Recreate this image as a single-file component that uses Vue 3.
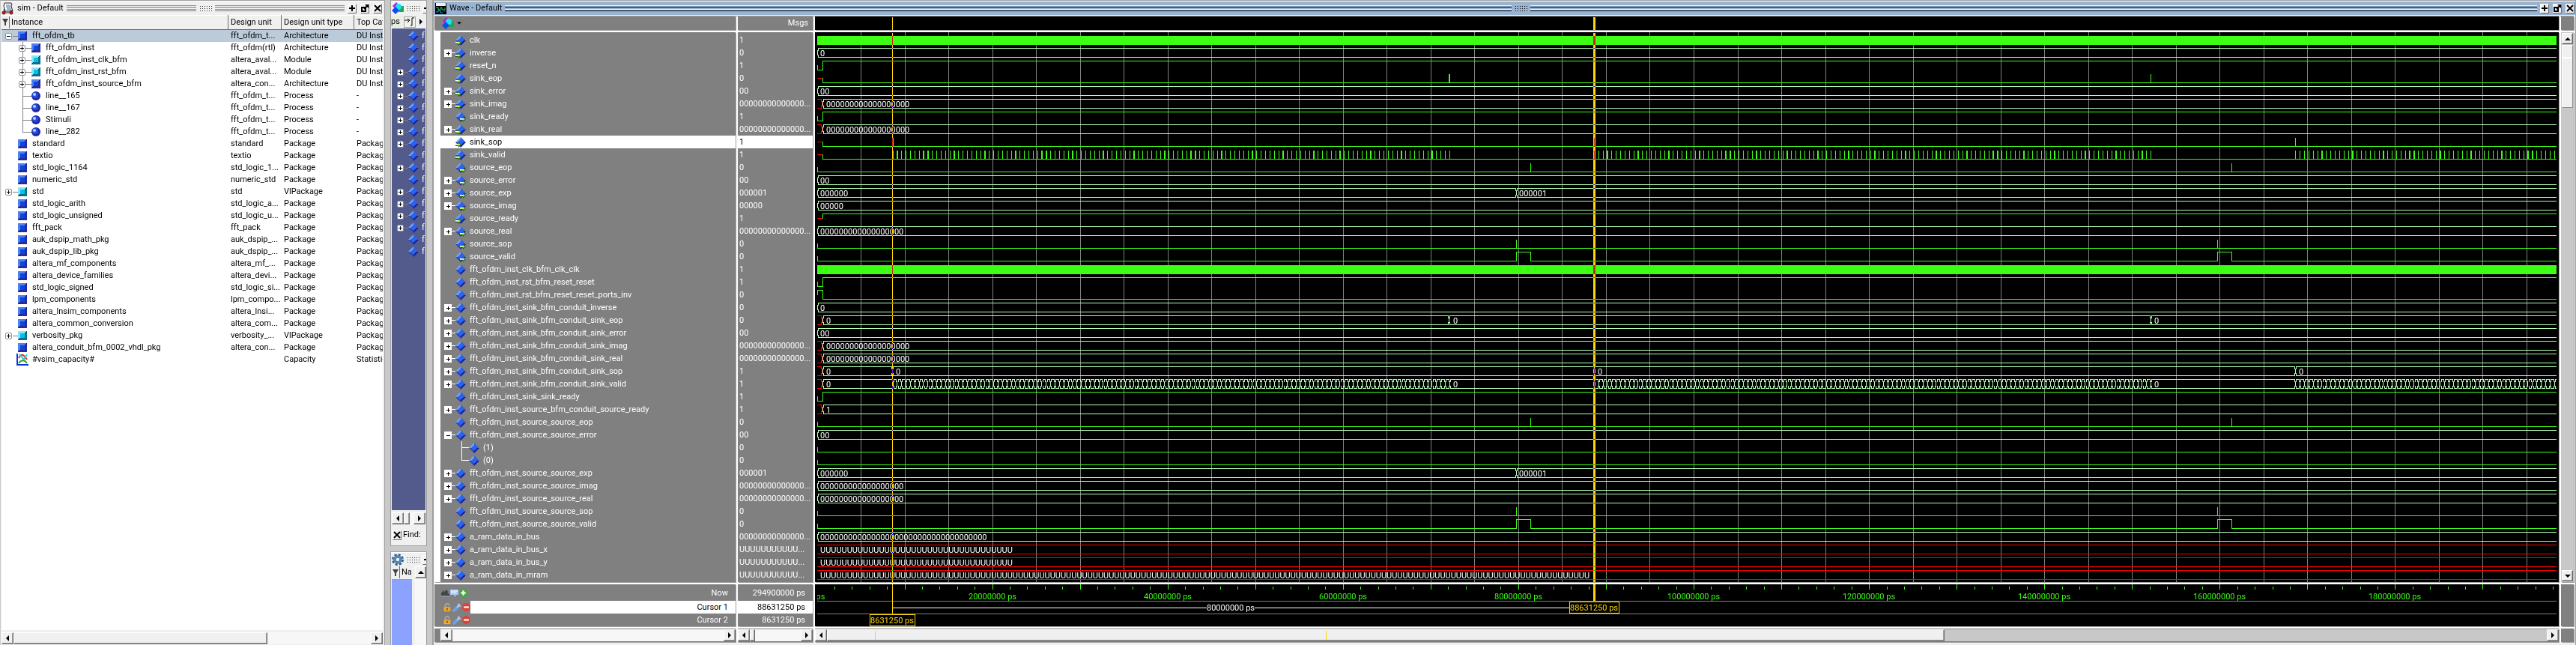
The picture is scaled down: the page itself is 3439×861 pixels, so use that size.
<script setup>
// ---- design hierarchy -------------------------------------------------
const A = 'Architecture', D = 'DU Inst', P = 'Package'
const tree = [
  ['fft_ofdm_tb', 'fft_ofdm_t...', A, D, 'blue', 0, '-'],
  ['fft_ofdm_inst', 'fft_ofdm(rtl)', A, D, 'blue', 1, '+'],
  ['fft_ofdm_inst_clk_bfm', 'altera_aval...', 'Module', D, 'cyan', 1, '+'],
  ['fft_ofdm_inst_rst_bfm', 'altera_aval...', 'Module', D, 'cyan', 1, '+'],
  ['fft_ofdm_inst_source_bfm', 'altera_con...', A, D, 'blue', 1, '+'],
  ['line__165', 'fft_ofdm_t...', 'Process', '-', 'ball', 1, ''],
  ['line__167', 'fft_ofdm_t...', 'Process', '-', 'ball', 1, ''],
  ['Stimuli', 'fft_ofdm_t...', 'Process', '-', 'ball', 1, ''],
  ['line__282', 'fft_ofdm_t...', 'Process', '-', 'ball', 1, 'end'],
  ['standard', 'standard', P, P, 'blue', 0, ''],
  ['textio', 'textio', P, P, 'blue', 0, ''],
  ['std_logic_1164', 'std_logic_1...', P, P, 'blue', 0, ''],
  ['numeric_std', 'numeric_std', P, P, 'blue', 0, ''],
  ['std', 'std', 'VlPackage', P, 'cyan', 0, '+'],
  ['std_logic_arith', 'std_logic_a...', P, P, 'blue', 0, ''],
  ['std_logic_unsigned', 'std_logic_u...', P, P, 'blue', 0, ''],
  ['fft_pack', 'fft_pack', P, P, 'blue', 0, ''],
  ['auk_dspip_math_pkg', 'auk_dspip_...', P, P, 'blue', 0, ''],
  ['auk_dspip_lib_pkg', 'auk_dspip_...', P, P, 'blue', 0, ''],
  ['altera_mf_components', 'altera_mf_...', P, P, 'blue', 0, ''],
  ['altera_device_families', 'altera_devi...', P, P, 'blue', 0, ''],
  ['std_logic_signed', 'std_logic_si...', P, P, 'blue', 0, ''],
  ['lpm_components', 'lpm_compo...', P, P, 'blue', 0, ''],
  ['altera_lnsim_components', 'altera_lnsi...', P, P, 'blue', 0, ''],
  ['altera_common_conversion', 'altera_com...', P, P, 'blue', 0, ''],
  ['verbosity_pkg', 'verbosity_...', 'VlPackage', P, 'cyan', 0, '+'],
  ['altera_conduit_bfm_0002_vhdl_pkg', 'altera_con...', P, P, 'blue', 0, ''],
  ['#vsim_capacity#', '', 'Capacity', 'Statistic', 'chart', 0, ''],
].map(([name, unit, type, cat, icon, level, mark]) => ({ name, unit, type, cat, icon, level, mark }))

const objects = [0, 0, 0, 1, 1, 1, 1, 1, 1, 1, 0, 1, 0, 1, 1, 1, 1, 0, 0]

// ---- signals ----------------------------------------------------------
// name, value, direction, expander, waveform kind, detail
const Z = '00000000000000...', UU = 'UUUUUUUUUUU...'
const z = n => '0'.repeat(n)
const F = 'fft_ofdm_inst_'
const frames = [100, 1037, 1973]
const signals = [
  ['clk', '1', 'in', '', 'clock'],
  ['inverse', '0', 'in', '+', 'bus', { text: '0' }],
  ['reset_n', '1', 'in', '', 'rise'],
  ['sink_eop', '0', 'in', '', 'low', { undef: 1, spikes: [[843, 2], [1780, 1]] }],
  ['sink_error', '00', 'in', '+', 'bus', { text: '00' }],
  ['sink_imag', Z, 'in', '+', 'bus', { undef: 1, text: z(18) }],
  ['sink_ready', '1', 'out', '', 'rise'],
  ['sink_real', Z, 'in', '+', 'bus', { undef: 1, text: z(18) }],
  ['sink_sop', '1', 'in', '', 'low', { undef: 1, spikes: [[100, 2], [1037, 1], [1973, 1]] }],
  ['sink_valid', '1', 'in', '', 'low', { undef: 1, train: 1 }],
  ['source_eop', '0', 'out', '', 'low', { spikes: [[952, 1], [1888, 1]] }],
  ['source_error', '00', 'out', '+', 'bus', { text: '00' }],
  ['source_exp', '000001', 'out', '+', 'bus', { text: '000000', changes: [[933, '000001', 4]] }],
  ['source_imag', '00000', 'out', '+', 'bus', { text: '00000' }],
  ['source_ready', '1', 'in', '', 'rise', { undef: 1 }],
  ['source_real', Z, 'out', '+', 'bus', { text: z(18) }],
  ['source_sop', '0', 'out', '', 'low', { spikes: [[933, 1], [1869, 1]] }],
  ['source_valid', '0', 'out', '', 'low', { boxes: [[933, 952], [1869, 1888]] }],
  [F + 'clk_bfm_clk_clk', '1', '', '', 'clock'],
  [F + 'rst_bfm_reset_reset', '1', '', '', 'rise'],
  [F + 'rst_bfm_reset_reset_ports_inv', '0', '', '', 'fall'],
  [F + 'sink_bfm_conduit_inverse', '0', '', '+', 'bus', { text: '0' }],
  [F + 'sink_bfm_conduit_sink_eop', '0', '', '+', 'bus', { undef: 1, text: '0', changes: [[843, '0', 6], [1780, '0', 5]] }],
  [F + 'sink_bfm_conduit_sink_error', '00', '', '+', 'bus', { text: '00' }],
  [F + 'sink_bfm_conduit_sink_imag', Z, '', '+', 'bus', { undef: 1, text: z(18) }],
  [F + 'sink_bfm_conduit_sink_real', Z, '', '+', 'bus', { undef: 1, text: z(18) }],
  [F + 'sink_bfm_conduit_sink_sop', '1', '', '+', 'bus', { undef: 1, text: '0', changes: frames.map(x => [x, '0', 5]) }],
  [F + 'sink_bfm_conduit_sink_valid', '1', '', '+', 'bus', { undef: 1, text: '0', train: 1, labels: [[849, '0'], [1785, '0']] }],
  [F + 'sink_sink_ready', '1', '', '', 'rise'],
  [F + 'source_bfm_conduit_source_ready', '1', '', '+', 'bus', { undef: 1, text: '1' }],
  [F + 'source_source_eop', '0', '', '', 'low', { spikes: [[952, 1], [1888, 1]] }],
  [F + 'source_source_error', '00', '', '-', 'bus', { text: '00' }],
  ['(1)', '0', '', 'mid', 'low'],
  ['(0)', '0', '', 'end', 'low'],
  [F + 'source_source_exp', '000001', '', '+', 'bus', { text: '000000', changes: [[933, '000001', 4]] }],
  [F + 'source_source_imag', Z, '', '+', 'bus', { text: z(18) }],
  [F + 'source_source_real', Z, '', '+', 'bus', { text: z(18) }],
  [F + 'source_source_sop', '0', '', '', 'low', { spikes: [[933, 1], [1869, 1]] }],
  [F + 'source_source_valid', '0', '', '', 'low', { boxes: [[933, 952], [1869, 1888]] }],
  ['a_ram_data_in_bus', Z, '', '+', 'bus', { text: z(36) }],
  ['a_ram_data_in_bus_x', UU, '', '+', 'unknown', { text: 'U'.repeat(36) }],
  ['a_ram_data_in_bus_y', UU, '', '+', 'unknown', { text: 'U'.repeat(36) }],
  ['a_ram_data_in_mram', UU, '', '+', 'unknown', { text: 'U'.repeat(144) }],
].map(([name, value, dir, mark, kind, opt = {}]) => ({ name, value, dir, mark, kind, opt }))

// ---- waveform geometry ------------------------------------------------
const SCALE = 11.705 // pixels per 1,000,000 ps
const FAR = 9000
const ROW = 17
const green = [], pale = [], red = [], blocks = [], labels = []
const H = (to, a, b, y) => to.push(`M${a} ${y}H${b}`)
const V = (to, x, a, b) => to.push(`M${x} ${a}V${b}`)

// half-period pulses: 128 per frame, three frames
const pulses = []
for (const start of [8.63, 88.63, 168.63]) {
  for (let i = 0; i < 128; i++) {
    const t = (start + i * 0.5) * SCALE
    const x = Math.floor(t)
    pulses.push([x, Math.max(1, Math.floor(t + 1.17) - x)])
  }
}

signals.forEach((s, i) => {
  const y = 2 + i * ROW
  const top = y + 2, mid = y + 8, low = y + 14
  const o = s.opt
  if (s.kind === 'clock') {
    blocks.push([0, y + 3, FAR, 12])
  } else if (s.kind === 'rise') {
    if (o.undef) { H(red, 0, 6, mid); V(green, 7, top, mid) }
    else { V(green, 0, mid, low); H(green, 0, 7, low); V(green, 7, top, low) }
    H(green, 7, FAR, top)
  } else if (s.kind === 'fall') {
    V(green, 0, top, mid); H(green, 0, 7, top); V(green, 7, top, low); H(green, 7, FAR, low)
  } else if (s.kind === 'low') {
    if (o.undef) { H(red, 0, 6, mid); V(green, 7, mid, low) }
    else V(green, 0, mid, low)
    let from = o.undef ? 7 : 0
    for (const [a, b] of o.boxes || []) {
      H(green, from, a, low); V(green, a, top, low); H(green, a, b, top); V(green, b, top, low)
      from = b
    }
    H(green, from, FAR, low)
    for (const [x, w] of (o.train ? pulses : o.spikes || [])) blocks.push([x, y + 3, w, 12])
  } else if (s.kind === 'unknown') {
    H(red, 0, FAR, top); H(red, 0, FAR, low)
    labels.push([4, y + 13, o.text])
  } else {
    let from = 0
    if (o.undef) {
      H(red, 0, 5, top); H(red, 0, 5, low)
      V(red, 5, top, top + 3); V(red, 5, low - 3, low); V(red, 6, top + 3, low - 3)
      from = 7
    }
    V(pale, from, top + 3, low - 3)
    V(pale, from + 1, top, top + 3); V(pale, from + 1, low - 3, low)
    labels.push([from ? 12 : 4, y + 13, o.text])
    from += 1
    const cross = (o.train ? pulses : (o.changes || []).map(c => [c[0], 1]))
    for (const [x, w] of cross) {
      H(pale, from, x - 1, top); H(pale, from, x - 1, low)
      V(pale, x - 1, top, top + 3); V(pale, x - 1, low - 3, low)
      V(pale, x, top + 3, low - 3)
      V(pale, x + w, top, top + 3); V(pale, x + w, low - 3, low)
      from = x + w
    }
    H(pale, from, FAR, top); H(pale, from, FAR, low)
    for (const [x, t, dx] of o.changes || []) labels.push([x + dx, y + 13, t])
    for (const [x, t] of o.labels || []) labels.push([x, y + 13, t])
  }
})

const grid = Array.from({ length: 120 }, (_, i) => Math.floor((i + 1) * 5 * SCALE))
const ticks = Array.from({ length: 300 }, (_, i) => ({
  x: Math.floor((i + 1) * 2 * SCALE), y: (i + 1) % 5 ? 3 : 0,
}))
const marks = Array.from({ length: 10 }, (_, i) => ({
  x: Math.floor(i * 20 * SCALE), text: (i ? i * 20 + '000000' : '0') + ' ps',
}))
const cursors = [{ x: 100, w: 1 }, { x: 1036, w: 3 }]
const overview = [{ left: '2.8%' }, { left: '29%' }]
const windowButtons = ['add', 'undock', 'close']
</script>

<template>
  <div class="app">
    <!-- shared drawings -->
    <svg class="defs" width="0" height="0" aria-hidden="true">
      <symbol id="i-blue" viewBox="0 0 12 12">
        <rect width="12" height="12" fill="#2a2a9c" /><path d="M0 0H12L0 12Z" fill="#4f80ee" />
        <path d="M0 12L3 9M9 3L12 0" stroke="#101040" /><rect x="3" y="3" width="6" height="6" fill="#0a46e6" />
      </symbol>
      <symbol id="i-cyan" viewBox="0 0 12 12">
        <rect width="12" height="12" fill="#08708c" /><path d="M0 0H12L0 12Z" fill="#8ce6f2" />
        <path d="M0 12L3 9M9 3L12 0" stroke="#064050" /><rect x="3" y="3" width="6" height="6" fill="#00c0f4" />
      </symbol>
      <symbol id="i-ball" viewBox="0 0 12 12">
        <circle cx="6" cy="6" r="6" fill="#2424a4" /><circle cx="5" cy="5" r="4" fill="#1d50e0" />
        <circle cx="4" cy="4" r="2" fill="#b8d0ff" />
      </symbol>
      <symbol id="i-chart" viewBox="0 0 16 16">
        <path d="M1 0V15H16" fill="none" stroke="#1034e0" stroke-width="2" />
        <path d="M3 6C6 0 9 0 14 8" fill="none" stroke="#e02828" stroke-width="2" />
        <path d="M4 1L10 8L14 1" fill="none" stroke="#30c8dc" stroke-width="2" />
        <path d="M3 13C6 8 11 8 14 13" fill="none" stroke="#38a030" stroke-width="2" />
      </symbol>
      <symbol id="i-dia" viewBox="0 0 14 14">
        <path d="M7 0L14 7H7Z" fill="#3560d8" /><path d="M7 0L0 7H7Z" fill="#7aa6fa" />
        <path d="M0 7L7 14V7Z" fill="#3344b8" /><path d="M14 7L7 14V7Z" fill="#1c1c90" />
        <path d="M7 3L11 7L7 11L3 7Z" fill="#2566f2" />
      </symbol>
      <symbol id="i-arrow" viewBox="0 0 8 7">
        <path d="M0 2H4V0L8 3L4 7V5H0Z" fill="#1c5a10" /><path d="M0 2H4V1L7 3L4 5V4H0Z" fill="#a8f040" />
        <path d="M0 2H4V3H0Z" fill="#fff" />
      </symbol>
      <symbol id="i-group" viewBox="0 0 16 16">
        <path d="M6 0L11 5L6 10L1 5Z" fill="#b41ed8" /><path d="M9 5H16V13H9Z" fill="#1ea850" />
        <circle cx="9" cy="6" r="4" fill="#18e4f6" /><path d="M5 6L10 11L5 16L0 11Z" fill="#0a50f0" />
      </symbol>
      <symbol id="i-add" viewBox="0 0 12 12"><path d="M6 2V10M2 6H10" stroke="#000" stroke-width="2" /></symbol>
      <symbol id="i-undock" viewBox="0 0 12 12">
        <path d="M2 5H7V10H2Z" fill="none" stroke="#000" stroke-width="2" /><path d="M5 7L9 3" stroke="#000" stroke-width="2" /><path d="M6 1H11V6Z" />
      </symbol>
      <symbol id="i-close" viewBox="0 0 12 12"><path d="M2 2L10 10M10 2L2 10" stroke="#000" stroke-width="2" /></symbol>
      <symbol id="i-left" viewBox="0 0 8 8"><path d="M6 0V8L2 4Z" /></symbol>
      <symbol id="i-right" viewBox="0 0 8 8"><path d="M2 0V8L6 4Z" /></symbol>
      <symbol id="i-up" viewBox="0 0 8 8"><path d="M0 6H8L4 2Z" /></symbol>
      <symbol id="i-down" viewBox="0 0 8 8"><path d="M0 2H8L4 6Z" /></symbol>
      <symbol id="i-filter" viewBox="0 0 8 9"><path d="M0 0H8L5 5V9H3V5Z" fill="#444" /></symbol>
      <symbol id="i-script" viewBox="0 0 17 17">
        <path d="M4 1H13Q15 3 13 5L15 12H5L3 5Z" fill="#fff" stroke="#222" />
        <path d="M6 4H12M6 6H12M7 8H13M7 10H13" stroke="#4868a8" />
        <path d="M3 9L5 13M13 10V13" stroke="#222" />
        <circle cx="3" cy="14" r="2" fill="#e01818" stroke="#600" /><circle cx="13" cy="14" r="2" fill="#e01818" stroke="#600" />
        <path d="M5 14H11" stroke="#222" />
      </symbol>
      <symbol id="i-wave" viewBox="0 0 15 15">
        <rect width="15" height="15" fill="#000" /><rect x="1" y="0" width="13" height="4" fill="#f0f0f0" />
        <path d="M1 6H4V9H7V6H9V9H13V6" fill="none" stroke="#20d060" /><path d="M1 12H4V10H7V13H10" fill="none" stroke="#20a8c8" />
        <path d="M10 11H14" stroke="#4040d0" />
      </symbol>
      <symbol id="i-gear" viewBox="0 0 16 16">
        <circle cx="8" cy="8" r="6" fill="none" stroke="#2f5a88" stroke-width="4" stroke-dasharray="2.7 2" />
        <circle cx="8" cy="8" r="4" fill="none" stroke="#5488b8" stroke-width="4" /><circle cx="8" cy="8" r="2" fill="#eef4f8" />
      </symbol>
      <symbol id="i-step" viewBox="0 0 14 12">
        <path d="M0 4H6M4 2L7 4L4 7" fill="none" stroke="#000" /><path d="M8 11H10V1H13" fill="none" stroke="#000" stroke-width="1" />
      </symbol>
      <symbol id="i-lock" viewBox="0 0 12 14">
        <path d="M3 7V4Q3 1 6 1Q9 1 9 4" fill="none" stroke="#aaa698" stroke-width="2" />
        <rect x="1" y="6" width="10" height="7" fill="#f4b43c" /><path d="M1 8H11M1 11H11" stroke="#d88c18" /><rect x="5" y="8" width="2" height="3" fill="#865a14" />
      </symbol>
      <symbol id="i-wrench" viewBox="0 0 12 12">
        <path d="M2 10L7 5" stroke="#6f9ee8" stroke-width="4" stroke-linecap="round" /><path d="M6 6L9 3" stroke="#b8c8e0" stroke-width="2" />
        <path d="M8 0Q6 3 8 4Q10 6 12 4L10 3V2Z" fill="#b8c8e0" />
      </symbol>
      <symbol id="i-minus" viewBox="0 0 10 10"><circle cx="5" cy="5" r="5" fill="#dc4238" /><path d="M2 5H8" stroke="#fff" stroke-width="2" /></symbol>
      <symbol id="i-plus" viewBox="0 0 10 10"><circle cx="5" cy="5" r="5" fill="#42a83a" /><path d="M2 5H8M5 2V8" stroke="#fff" stroke-width="2" /></symbol>
      <symbol id="i-config" viewBox="0 0 10 10"><path d="M0 9V5L3 2L4 4L6 1L8 3V6H10V9Z" fill="#444" /><path d="M0 9H10" stroke="#8ab0e0" /></symbol>
      <symbol id="i-note" viewBox="0 0 11 11"><path d="M0 1H11V8H8L6 11L5 8H0Z" fill="#a8c8f4" /><path d="M1 3H10M1 5H8" stroke="#fff" /></symbol>
    </svg>

    <!-- structure window -->
    <section class="panel sim">
      <header class="title">
        <svg class="i17"><use href="#i-script" /></svg>
        <h2>sim - Default</h2>
        <span class="rails"><i></i><i></i></span><span class="grip"></span><span class="rails"><i></i><i></i></span>
        <button v-for="b in windowButtons" :key="b" class="tool" :aria-label="b"><svg class="i12"><use :href="'#i-' + b" /></svg></button>
      </header>
      <div class="sheet">
        <table>
          <colgroup><col class="c-name"><col class="c-unit"><col class="c-type"><col></colgroup>
          <thead>
            <tr>
              <th><span class="filter"><svg class="i9"><use href="#i-filter" /></svg></span>Instance</th>
              <th>Design unit</th><th>Design unit type</th><th>Top Cat</th>
            </tr>
          </thead>
          <tbody>
            <tr v-for="(r, i) in tree" :key="r.name" :class="{ current: i === 0 }">
              <td>
                <div class="node" :class="{ child: r.level }">
                  <span class="slot" :class="{ trunk: r.level, last: r.mark === 'end' }">
                    <button v-if="r.mark === '+' || r.mark === '-'" class="exp" :class="{ open: r.mark === '-' }" :aria-label="'Toggle ' + r.name"></button>
                  </span>
                  <span class="link wide" :class="{ on: r.mark || r.level }"></span>
                  <svg :class="r.icon === 'chart' ? 'i16' : 'i12'"><use :href="'#i-' + r.icon" /></svg>
                  <span class="label">{{ r.name }}</span>
                </div>
              </td>
              <td>{{ r.unit }}</td><td>{{ r.type }}</td><td>{{ r.cat }}</td>
            </tr>
          </tbody>
        </table>
      </div>
      <div class="scroll">
        <button aria-label="Scroll left"><svg class="i8"><use href="#i-left" /></svg></button>
        <div class="track"><div class="thumb t-sim"></div></div>
        <button aria-label="Scroll right"><svg class="i8"><use href="#i-right" /></svg></button>
      </div>
    </section>

    <!-- objects and processes windows -->
    <div class="stack">
      <section class="panel objects">
        <header class="title">
          <svg class="i16"><use href="#i-group" /></svg><span class="grip"></span><button class="tool" aria-label="add"><svg class="i12"><use href="#i-add" /></svg></button>
        </header>
        <div class="time"><span>ps</span><button aria-label="Step"><svg class="i14"><use href="#i-step" /></svg></button><svg class="i8"><use href="#i-right" /></svg></div>
        <ul class="navy">
          <li v-for="(e, i) in objects" :key="i">
            <span class="slot"><button v-if="e" class="exp" aria-label="Expand object"></button></span>
            <span class="link" :class="{ on: e }"></span>
            <svg class="i14"><use href="#i-dia" /></svg><span class="label">f</span>
          </li>
        </ul>
        <div class="scroll">
          <button aria-label="Scroll left"><svg class="i8"><use href="#i-left" /></svg></button>
          <div class="track"><div class="thumb t-half"></div></div>
          <button aria-label="Scroll right"><svg class="i8"><use href="#i-right" /></svg></button>
        </div>
        <div class="find"><button class="tool" aria-label="Close find"><svg class="i12"><use href="#i-close" /></svg></button><span>Find:</span></div>
      </section>
      <section class="panel procs">
        <header class="title">
          <svg class="i16"><use href="#i-gear" /></svg><span class="grip"></span><button class="tool" aria-label="add"><svg class="i12"><use href="#i-add" /></svg></button>
        </header>
        <div class="procbody">
          <div class="proclist">
            <div class="prochead"><span class="filter"><svg class="i9"><use href="#i-filter" /></svg></span>Na</div>
            <div class="sky"></div>
          </div>
          <div class="vstrip"><button aria-label="Scroll up"><svg class="i8"><use href="#i-up" /></svg></button></div>
        </div>
      </section>
    </div>

    <!-- wave window -->
    <section class="panel wave">
      <header class="title active">
        <svg class="i15"><use href="#i-wave" /></svg>
        <h2>Wave - Default</h2>
        <span class="rails"><i></i><i></i></span><span class="grip"></span><span class="rails"><i></i><i></i></span>
        <button v-for="b in windowButtons" :key="b" class="tool" :aria-label="b"><svg class="i12"><use :href="'#i-' + b" /></svg></button>
      </header>
      <div class="panes">
        <div class="cell bar"><svg class="i16"><use href="#i-group" /></svg><svg class="i8"><use href="#i-down" /></svg></div>
        <div class="cell bar msgs">Msgs</div>
        <div class="cell ink">
          <svg class="plot"><g class="cursor"><rect v-for="c in cursors" :key="c.x" :x="c.x" y="1" :width="c.w" height="17" /></g></svg>
        </div>
        <div class="cell"></div>

        <div class="cell names">
          <ul>
            <li v-for="s in signals" :key="s.name" :class="{ picked: s.name === 'sink_sop', child: s.mark === 'mid' || s.mark === 'end' }">
              <span class="slot" :class="{ trunk: s.mark === 'mid' || s.mark === 'end', last: s.mark === 'end' }">
                <button v-if="s.mark === '+' || s.mark === '-'" class="exp" :class="{ open: s.mark === '-' }" :aria-label="'Toggle ' + s.name"></button>
              </span>
              <span class="link" :class="{ on: s.mark }"></span>
              <span class="sig"><svg class="i14"><use href="#i-dia" /></svg><svg v-if="s.dir" class="dir" :class="s.dir"><use href="#i-arrow" /></svg></span>
              <span class="label">{{ s.name }}</span>
            </li>
          </ul>
        </div>
        <div class="cell values">
          <ul><li v-for="s in signals" :key="s.name" :class="{ picked: s.name === 'sink_sop' }">{{ s.value }}</li></ul>
        </div>
        <div class="cell ink">
          <svg class="plot">
            <rect v-for="x in grid" :key="x" class="gridline" :x="x" y="0" width="1" height="9000" />
            <g transform="translate(0.5 0.5)" class="lines">
              <path class="pale" :d="pale.join('')" />
              <path class="green" :d="green.join('')" />
              <path class="red" :d="red.join('')" />
            </g>
            <rect v-for="(b, i) in blocks" :key="i" class="block" :x="b[0]" :y="b[1]" :width="b[2]" :height="b[3]" />
            <text v-for="(l, i) in labels" :key="'t' + i" class="value" :x="l[0]" :y="l[1]">{{ l[2] }}</text>
            <g class="cursor"><rect v-for="c in cursors" :key="c.x" :x="c.x" y="1" :width="c.w" height="9000" /></g>
          </svg>
        </div>
        <div class="cell vscroll">
          <button aria-label="Scroll up"><svg class="i8"><use href="#i-up" /></svg></button>
          <div class="vtrack"><div class="vthumb"></div></div>
          <button aria-label="Scroll down"><svg class="i8"><use href="#i-down" /></svg></button>
        </div>

        <div class="cell foot">
          <div class="frow now"><span class="tools"><svg class="i10"><use href="#i-config" /></svg><svg class="i10"><use href="#i-note" /></svg><svg class="i10"><use href="#i-plus" /></svg></span><span class="fname">Now</span></div>
          <div class="frow on"><span class="tools"><svg class="i12"><use href="#i-lock" /></svg><svg class="i12"><use href="#i-wrench" /></svg><svg class="i10"><use href="#i-minus" /></svg></span><span class="fname">Cursor 1</span></div>
          <div class="frow"><span class="tools"><svg class="i12"><use href="#i-lock" /></svg><svg class="i12"><use href="#i-wrench" /></svg><svg class="i10"><use href="#i-minus" /></svg></span><span class="fname">Cursor 2</span></div>
        </div>
        <div class="cell foot">
          <div class="frow now"><span class="fname">294900000 ps</span></div>
          <div class="frow on"><span class="fname">88631250 ps</span></div>
          <div class="frow"><span class="fname">8631250 ps</span></div>
        </div>
        <div class="cell ink">
          <svg class="plot">
            <rect v-for="t in ticks" :key="t.x" class="block" :x="t.x" :y="t.y" width="1" :height="7 - t.y" />
            <text v-for="m in marks" :key="m.x" class="mark" :x="m.x" y="20">{{ m.text }}</text>
            <rect class="gridline" x="0" y="22" width="9000" height="1" /><rect class="gridline" x="0" y="39" width="9000" height="1" />
            <rect x="100" y="31" width="904" height="1" fill="#fff" />
            <rect x="520" y="24" width="64" height="14" fill="#000" />
            <text class="value centre" x="552" y="35">80000000 ps</text>
            <rect class="amber" x="100" y="0" width="1" height="39" /><rect class="amber" x="1036" y="0" width="3" height="22" />
            <g transform="translate(0.5 0.5)"><rect class="tag" x="1004" y="23" width="66" height="15" /><rect class="tag" x="70" y="40" width="60" height="15" /></g>
            <text class="tagtext" x="1037" y="35">88631250 ps</text><text class="tagtext" x="100" y="52">8631250 ps</text>
          </svg>
        </div>
        <div class="cell"></div>

        <div class="cell base inset"><div class="scroll">
          <button aria-label="Scroll left"><svg class="i8"><use href="#i-left" /></svg></button><div class="track"></div><button aria-label="Scroll right"><svg class="i8"><use href="#i-right" /></svg></button>
        </div></div>
        <div class="cell base"><div class="scroll">
          <button aria-label="Scroll left"><svg class="i8"><use href="#i-left" /></svg></button><div class="track"><div class="thumb t-small"></div></div><button aria-label="Scroll right"><svg class="i8"><use href="#i-right" /></svg></button>
        </div></div>
        <div class="cell base"><div class="scroll solid">
          <button aria-label="Scroll left"><svg class="i8"><use href="#i-left" /></svg></button><div class="track"><div class="thumb t-wave"></div><i v-for="o in overview" :key="o.left" class="pin" :style="o"></i></div><button aria-label="Scroll right"><svg class="i8"><use href="#i-right" /></svg></button>
        </div></div>
        <div class="cell"></div>
      </div>
    </section>
  </div>
</template>

<style>
body { margin: 0; overflow: hidden; background: #c9c9c9; }
</style>

<style scoped>
.app {
  display: grid; grid-template-columns: 514px 49px minmax(0, 1fr); column-gap: 7px;
  height: 100vh; background: #c9c9c9; color: #000;
  font: 11px/16px Roboto, "Liberation Sans", sans-serif;
}
.defs { position: absolute; }
svg { display: block; flex: none; }
ul { list-style: none; margin: 0; padding: 0; }
h2 { font: inherit; margin: 0; white-space: nowrap; }
button { font: inherit; padding: 0; margin: 0; border: 0; box-sizing: border-box; display: flex; align-items: center; justify-content: center; flex: none; }
.i8 { width: 8px; height: 8px; } .i9 { width: 8px; height: 9px; } .i10 { width: 11px; height: 11px; }
.i12 { width: 12px; height: 12px; } .i14 { width: 14px; height: 14px; } .i15 { width: 15px; height: 15px; }
.i16 { width: 16px; height: 16px; } .i17 { width: 17px; height: 17px; }

.panel { display: flex; flex-direction: column; min-width: 0; min-height: 0; box-sizing: border-box; background: #f0f0f0; border: 1px solid #a0a0a0; border-bottom: 0; overflow: hidden; }
.title { display: flex; align-items: center; gap: 4px; height: 19px; flex: none; box-sizing: border-box; padding: 0 3px 0 0; border-top: 1px solid #fff; overflow: hidden; }
.rails { flex: 1; display: flex; flex-direction: column; gap: 2px; min-width: 0; }
.rails i { height: 1px; border-top: 1px solid #909090; border-bottom: 1px solid #6b6b6b; background: #fff; }
.grip { width: 17px; height: 8px; flex: none; background-image: radial-gradient(circle, #333 0 1px, transparent 1px); background-size: 3px 3px; }
.tool { width: 12px; height: 13px; background: #f0f0f0; border: 1px solid; border-color: #fff #6b6b6b #6b6b6b #fff; }
.title .tool + .tool { margin-left: 1px; }

/* structure window */
.sim { border-left-color: #c9c9c9; }
.sim .title { padding-left: 1px; }
.sheet { flex: 1; min-height: 0; overflow: hidden; background: #fff; margin: 0 2px 0 1px; }
table { border-collapse: separate; border-spacing: 0; table-layout: fixed; width: 100%; }
.c-name { width: 303px; } .c-unit { width: 71px; } .c-type { width: 97px; }
th, td { box-sizing: border-box; padding: 0 0 0 3px; text-align: left; font-weight: 400; white-space: nowrap; overflow: hidden; height: 16px; line-height: 16px; }
th { height: 20px; background: #f0f0f0; border-right: 1px solid #6b6b6b; border-bottom: 1px solid #6b6b6b; box-shadow: inset 0 1px #fff; }
th:first-child, td:first-child { padding-left: 0; }
th:last-child { border-right: 0; }
td:first-child { padding-left: 5px; }
.filter { display: inline-flex; align-items: center; justify-content: center; width: 10px; height: 16px; margin-right: 2px; border-right: 1px solid #6b6b6b; vertical-align: top; }
.current { background: #bccbda; }
.node { display: flex; align-items: center; height: 16px; }
.node.child { padding-left: 18px; }
.node .label { margin-left: 7px; }
.node .i16 { margin: 0 -2px; }
.slot { display: flex; align-items: center; width: 10px; flex: none; align-self: stretch; --line: #808080; }
.trunk { background: linear-gradient(var(--line), var(--line)) 5px 0 / 1px 100% no-repeat, linear-gradient(var(--line), var(--line)) 5px 50% / 5px 1px no-repeat; }
.trunk.last { background: linear-gradient(var(--line), var(--line)) 5px 0 / 1px 50% no-repeat, linear-gradient(var(--line), var(--line)) 5px 50% / 5px 1px no-repeat; }
.link { width: 5px; height: 1px; flex: none; }
.link.wide { width: 7px; }
.link.on { background: #808080; }
.exp { width: 9px; height: 9px; border: 1px solid #8090a8; border-radius: 2px; background: linear-gradient(#000, #000) 1px 3px / 5px 1px no-repeat, linear-gradient(#000, #000) 3px 1px / 1px 5px no-repeat, #fff; }
.exp.open { background: linear-gradient(#000, #000) 1px 3px / 5px 1px no-repeat, #fff; }

/* scroll bars */
.scroll { display: flex; height: 16px; flex: none; background: #f7f7f7; }
.scroll button, .vstrip button, .vscroll button { width: 16px; height: 16px; background: #f0f0f0; border: 1px solid; border-color: #fff #6b6b6b #6b6b6b #fff; box-shadow: inset -1px -1px #a0a0a0; }
.scroll .track { flex: 1; position: relative; min-width: 0; }
.thumb { height: 16px; box-sizing: border-box; background: #f0f0f0; border: 1px solid; border-color: #fff #6b6b6b #6b6b6b #fff; box-shadow: inset -1px -1px #a0a0a0; }
.t-sim { width: 71%; } .t-half { width: 60%; } .t-small { width: 7px; } .t-wave { width: 65%; }
.solid .track { background: #c8c8c8; }
.pin { position: absolute; top: 2px; width: 1px; height: 12px; background: #ffd700; }
.sim > .scroll { margin: 3px 2px 1px 1px; }

/* objects and processes */
.stack { display: flex; flex-direction: column; gap: 7px; min-height: 0; }
.objects { flex: 1; border-bottom: 1px solid #a0a0a0; }
.procs { height: 125px; flex: none; }
.stack .title { padding: 0 0 0 1px; }
.time { display: flex; align-items: center; gap: 3px; height: 16px; margin: 1px 1px 1px 0; flex: none; overflow: hidden; background: #f0f0f0; }
.time span { width: 14px; background: #e6eee0; overflow: hidden; }
.time button { width: 16px; height: 15px; background: #f0f4ea; border: 1px solid #a0a0a0; }
.navy { flex: 1; min-height: 0; overflow: hidden; background: #525b8c; margin: 0 1px 3px; padding-top: 2px; color: #fff; }
.navy li { display: flex; align-items: center; height: 16px; padding-left: 7px; white-space: nowrap; }
.navy .label { margin-left: 4px; }
.objects .scroll { margin: 0 1px; }
.find { display: flex; align-items: center; gap: 2px; height: 28px; padding-left: 2px; flex: none; white-space: nowrap; }
.procbody { flex: 1; display: flex; min-height: 0; margin-left: 1px; }
.proclist { width: 27px; display: flex; flex-direction: column; overflow: hidden; margin-right: 4px; }
.prochead { height: 17px; border-bottom: 1px solid #a0a0a0; white-space: nowrap; }
.sky { flex: 1; background: #8ca2ff; }
.vstrip { flex: 1; background: #f7f7f7; }
.vstrip button { width: 15px; }

/* wave window */
.wave { border-left: 2px solid #a0a0a0; background: #f0f0f0; border-right: 1px solid #a0a0a0; }
.active { background: #99b4d1; padding: 0 1px 0 2px; }
.active .rails i { border-top-color: #e4f6fa; border-bottom-color: #000; background: none; }
.active .grip { background-image: radial-gradient(circle, #000 0 1px, transparent 1px); }
.panes {
  flex: 1; min-height: 0; display: grid; gap: 3px; margin: 2px 2px 4px 1px; background: #fff;
  grid-template-columns: 402px 100px minmax(0, 1fr) 17px; grid-template-rows: 18px minmax(0, 1fr) 56px 18px;
  box-shadow: 0 -1px #a0a0a0;
}
.cell { background: #808080; color: #fff; box-shadow: 1px 1px #a0a0a0; min-width: 0; min-height: 0; overflow: hidden; }
.bar { display: flex; align-items: center; padding-left: 10px; gap: 4px; color: #fff; }
.bar .i8 { fill: #000; width: 6px; height: 6px; }
.msgs { justify-content: flex-end; padding-right: 6px; }
.names, .values { padding-top: 2px; }
.names { border-left: 8px solid #fff; }
.names li { display: flex; align-items: center; height: 17px; padding-left: 5px; white-space: nowrap; }
.names li.child { padding-left: 23px; }
.names .slot { --line: #fff; }
.names .link.on { background: #fff; }
.names .label { margin-left: 5px; }
.names .exp { width: 10px; height: 10px; border-color: #fff; border-radius: 0; background: linear-gradient(#000, #000) 2px 4px / 5px 1px no-repeat, linear-gradient(#000, #000) 4px 2px / 1px 5px no-repeat, #fff; }
.names .exp.open { background: linear-gradient(#000, #000) 2px 4px / 5px 1px no-repeat, #fff; }
.sig { position: relative; flex: none; }
.dir { position: absolute; bottom: 0; width: 8px; height: 7px; }
.dir.in { left: 0; } .dir.out { right: 0; }
.picked { background: #fff; color: #000; }
.values li { height: 17px; line-height: 17px; padding-left: 2px; white-space: nowrap; overflow: hidden; }
.ink { background: #000; padding: 0 3px; }
.plot { width: 100%; height: 100%; overflow: hidden; shape-rendering: crispEdges; }
.gridline { fill: #808080; }
.lines path { fill: none; stroke-width: 1; stroke-linecap: square; }
.lines .pale { stroke: #b4ffb4; } .lines .green { stroke: #3cff14; } .lines .red { stroke: #f00; }
.block, .mark { fill: #3cff14; }
.value { fill: #fff; white-space: pre; }
.mark, .centre, .tagtext { text-anchor: middle; }
.amber, .tagtext { fill: #ffd700; }
.tag { fill: #000; stroke: #ffd700; }
.cursor { fill: #ffd700; mix-blend-mode: difference; }
.vscroll { display: flex; flex-direction: column; background: #c8c8c8; padding: 1px; }
.vscroll button { width: 15px; height: 15px; }
.vtrack { flex: 1; }
.vthumb { height: 12%; margin-top: 1px; width: 15px; box-sizing: border-box; background: linear-gradient(#fff, #fff) 0 15px / 100% 2px no-repeat, #f0f0f0; border: 1px solid; border-color: #fff #909090 #909090 #fff; }
.foot { display: flex; flex-direction: column; }
.frow { display: flex; align-items: center; height: 17px; }
.frow.now { height: 22px; }
.tools { display: flex; align-items: center; gap: 1px; width: 37px; padding-left: 11px; flex: none; }
.now .tools { padding-left: 9px; width: 39px; }
.fname { flex: 1; text-align: right; padding-right: 10px; line-height: 17px; }
.on .fname { background: #fff; color: #000; }
.base { padding: 1px 0; }
.base.inset { padding-left: 8px; }
</style>
